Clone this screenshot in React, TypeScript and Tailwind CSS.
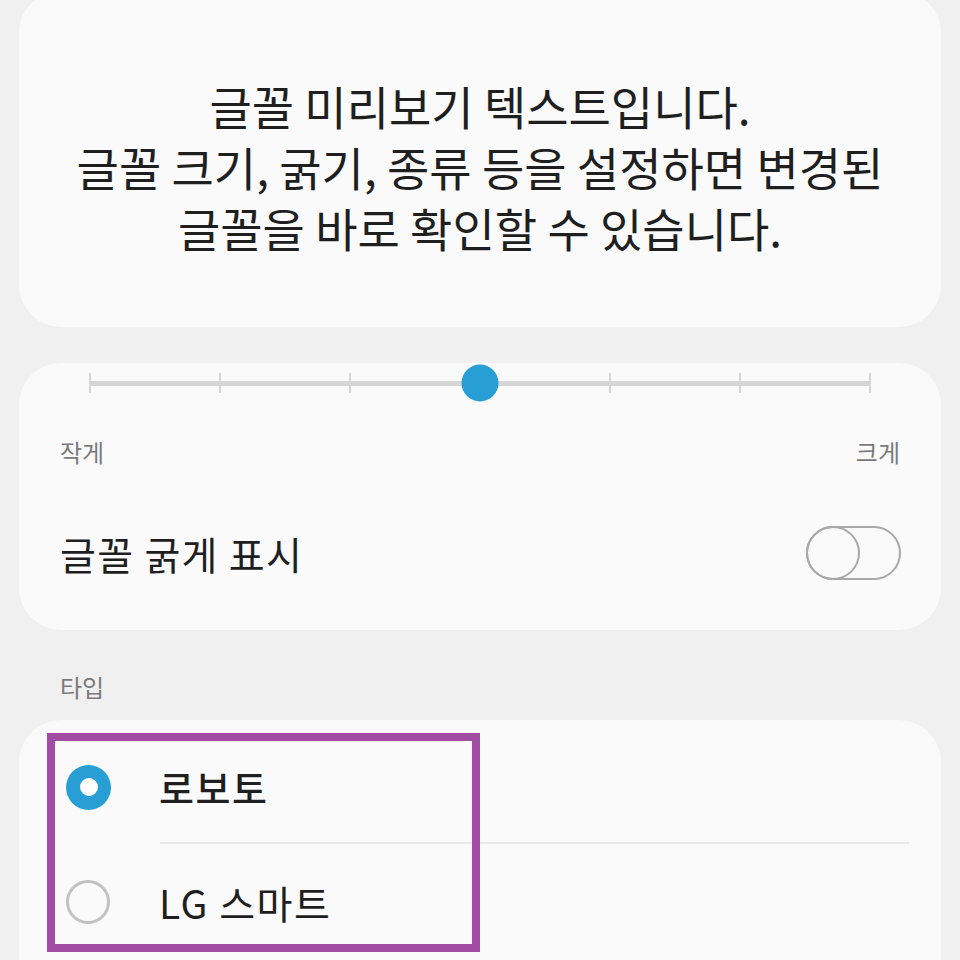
import React from 'react';

const TICKS = [0, 1, 2, 3, 4, 5, 6];

function Slider() {
  return (
    <div className="relative mx-[71px] h-[10px]">
      <div className="absolute inset-x-0 top-[2.5px] h-[5px] bg-[#d6d6d6]" />
      {TICKS.map((i) => (
        <div
          key={i}
          className="absolute top-[-5px] h-[20px] w-[2px] -translate-x-1/2 bg-[#d6d6d6]"
          style={{ left: `${(i / 6) * 100}%` }}
        />
      ))}
      <div className="absolute left-1/2 top-[5px] size-[37px] -translate-x-1/2 -translate-y-1/2 rounded-full bg-[#279fd5]" />
    </div>
  );
}

function Toggle() {
  return (
    <div className="relative h-[54px] w-[95px] rounded-full border-[2.5px] border-[#a8a8a8]">
      <div className="absolute left-[-2.5px] top-[-2.5px] size-[54px] rounded-full border-[2.5px] border-[#a8a8a8]" />
    </div>
  );
}

function Radio({ checked }: { checked: boolean }) {
  if (checked) {
    return (
      <div className="flex size-[45px] items-center justify-center rounded-full bg-[#279fd5]">
        <div className="size-[18px] rounded-full bg-white" />
      </div>
    );
  }
  return <div className="size-[44px] rounded-full border-[3px] border-[#c2c2c2]" />;
}

export default function App() {
  return (
    <div className="h-[960px] overflow-hidden bg-[#f0f0f0] px-[19px] font-['Noto_Sans_CJK_KR','Noto_Sans',sans-serif] text-[#1f1f1f]">
      <div className="-mt-[9px] flex h-[336px] flex-col items-center rounded-[42px] bg-[#fafafa] pt-[84px] text-center text-[46px] leading-[61px]">
        <p>글꼴 미리보기 텍스트입니다.</p>
        <p>글꼴 크기, 굵기, 종류 등을 설정하면 변경된</p>
        <p>글꼴을 바로 확인할 수 있습니다.</p>
      </div>

      <div className="mt-[36px] h-[267px] rounded-[42px] bg-[#fafafa] pt-[15px]">
        <Slider />
        <div className="mt-[48px] flex justify-between px-[41px] text-[24px] leading-[32px] text-[#7a7a7a]">
          <span>작게</span>
          <span>크게</span>
        </div>
        <div className="mt-[58px] flex items-center justify-between pl-[41px] pr-[40px]">
          <span className="text-[39px] leading-[54px] tracking-[1.3px]">글꼴 굵게 표시</span>
          <Toggle />
        </div>
      </div>

      <p className="mt-[42px] px-[41px] text-[24px] leading-[30px] text-[#7a7a7a]">타입</p>

      <div className="relative mt-[18px] h-[300px] rounded-[42px] bg-[#fafafa] pt-[12px]">
        <div className="flex h-[110px] items-center pl-[47px]">
          <Radio checked />
          <span className="ml-[48px] text-[38px] font-medium leading-[50px] tracking-[1.5px]">로보토</span>
        </div>
        <div className="ml-[141px] mr-[32px] h-[2px] bg-[#e8e8e8]" />
        <div className="flex h-[116px] items-center pl-[47px]">
          <Radio checked={false} />
          <span className="ml-[49px] text-[39px] leading-[50px] tracking-[1.5px]">LG 스마트</span>
        </div>
        <div className="absolute left-[28px] top-[13px] h-[219px] w-[433px] border-[8px] border-[#a24ba2]" />
      </div>
    </div>
  );
}
